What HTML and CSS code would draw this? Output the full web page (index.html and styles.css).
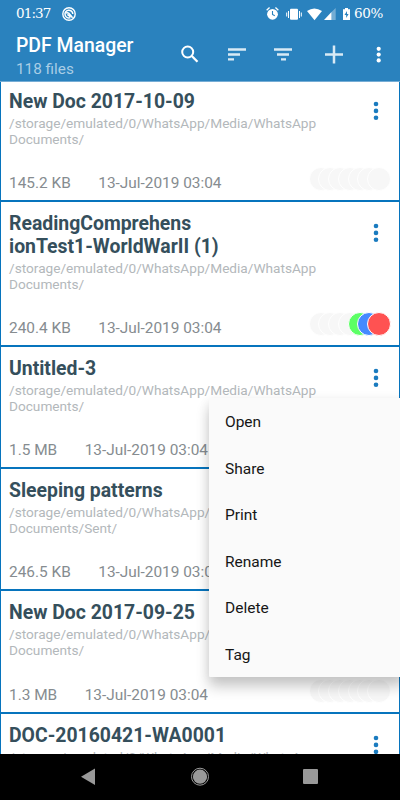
FILE: index.html
```html
<!DOCTYPE html>
<html lang="en">
<head>
<meta charset="utf-8">
<title>PDF Manager</title>
<link rel="stylesheet" href="styles.css">
</head>
<body>
<div class="screen">
  <header class="header">
    <div class="status">
      <span class="clock">01:37</span>
      <svg class="brand" width="14" height="14" viewBox="0 0 14 14"><circle cx="7" cy="7" r="6.2" fill="none" stroke="#fff" stroke-width="1.4"/><path d="M8.5 10.6A3.9 3.9 0 1 1 10.8 7M4 6.2C6.4 4.6 7.6 7 10.6 10.8M5.4 7.4L8.5 10" fill="none" stroke="#fff" stroke-width="1.5"/></svg>
      <svg class="signals" width="86" height="16" viewBox="0 0 86 16">
        <g fill="#fff"><circle cx="7.5" cy="8.3" r="5.4"/><path d="M1.2 3.7L4.1 1.1L5 2.1L2.1 4.7ZM13.8 3.7L10.9 1.1L10 2.1L12.9 4.7Z"/>
        <rect x="25" y="2.8" width="8" height="11" rx="1"/><path d="M23 5h1v7h-1zM21.2 6.5h1v4h-1zM34 5h1v7h-1zM35.8 6.5h1v4h-1z"/>
        <path d="M42 5Q49.3 0 57 5L49.5 14.2Z"/><path d="M59 14L66.5 6V14Z"/><path d="M66.5 6L70.7 2V14H66.5Z" opacity=".35"/>
        <path d="M78 3.2H80V2H83V3.2H85V14H78Z"/></g>
        <path d="M7.5 5V8.5L9.8 9.8" fill="none" stroke="#2a82be" stroke-width="1.1"/><path d="M82 5L79.5 9H81.2V12L83.6 7.9H82Z" fill="#2a82be"/>
      </svg>
      <span class="battery">60%</span>
    </div>
    <div class="toolbar">
      <div class="heading"><h1>PDF Manager</h1><p>118 files</p></div>
      <svg class="actions" width="210" height="28" viewBox="0 0 210 28">
        <g fill="none" stroke="#fff"><circle cx="7.7" cy="12" r="5.5" stroke-width="2"/><path d="M11.8 16L17.5 21.7" stroke-width="2.3"/>
        <g stroke="#d9eaf5" stroke-width="2.4"><path d="M48 9.5H66M48 14.5H60M48 19.4H54M94 9.5H112M97 14.5H109M101 19.4H106"/><path d="M145 14.5H163M154 5.5V23.5" stroke-width="2.5"/></g></g>
        <g fill="#fff"><circle cx="198.7" cy="8.8" r="2.1"/><circle cx="198.7" cy="14.6" r="2.1"/><circle cx="198.7" cy="20.4" r="2.1"/></g>
      </svg>
    </div>
  </header>
  <main class="files">
    <article class="card"><div class="top"><h2>New Doc 2017-10-09</h2><svg class="more"><use href="#dots"/></svg></div><p class="path">/storage/emulated/0/WhatsApp/Media/WhatsApp<br>Documents/</p><div class="meta"><span>145.2 KB</span><span>13-Jul-2019 03:04</span><div class="tags"><i></i><i></i><i></i><i></i><i></i><i></i><i></i></div></div></article>
    <article class="card tall"><div class="top"><h2>ReadingComprehens<br>ionTest1-WorldWarII (1)</h2><svg class="more"><use href="#dots"/></svg></div><p class="path">/storage/emulated/0/WhatsApp/Media/WhatsApp<br>Documents/</p><div class="meta"><span>240.4 KB</span><span>13-Jul-2019 03:04</span><div class="tags"><i></i><i></i><i></i><i></i><i class="green"></i><i class="blue"></i><i class="red"></i></div></div></article>
    <article class="card"><div class="top"><h2>Untitled-3</h2><svg class="more"><use href="#dots"/></svg></div><p class="path">/storage/emulated/0/WhatsApp/Media/WhatsApp<br>Documents/</p><div class="meta"><span>1.5 MB</span><span>13-Jul-2019 03:04</span></div></article>
    <article class="card"><div class="top"><h2>Sleeping patterns</h2></div><p class="path">/storage/emulated/0/WhatsApp/Media/WhatsApp<br>Documents/Sent/</p><div class="meta"><span>246.5 KB</span><span>13-Jul-2019 03:04</span></div></article>
    <article class="card"><div class="top"><h2>New Doc 2017-09-25</h2></div><p class="path">/storage/emulated/0/WhatsApp/Media/WhatsApp<br>Documents/</p><div class="meta"><span>1.3 MB</span><span>13-Jul-2019 03:04</span><div class="tags"><i></i><i></i><i></i><i></i><i></i><i></i><i></i></div></div></article>
    <article class="card"><div class="top"><h2>DOC-20160421-WA0001</h2><svg class="more"><use href="#dots"/></svg></div><p class="path">/storage/emulated/0/WhatsApp/Media/WhatsApp</p></article>
  </main>
  <nav class="navbar">
    <svg width="400" height="46" viewBox="0 0 400 46"><g fill="#999"><path d="M81 22.7L95 14.5V31Z"/><circle cx="200" cy="22.7" r="7.1"/><circle cx="200" cy="22.7" r="8.5" fill="none" stroke="#999" stroke-width="1"/><rect x="303" y="15" width="15" height="15" rx="1"/></g></svg>
  </nav>
  <div class="menu"><span>Open</span><span>Share</span><span>Print</span><span>Rename</span><span>Delete</span><span>Tag</span></div>
</div>
<svg class="defs"><symbol id="dots" viewBox="0 0 6 20"><circle cx="3" cy="3" r="2.3" fill="#1a7bbf"/><circle cx="3" cy="9.9" r="2.3" fill="#1a7bbf"/><circle cx="3" cy="16.8" r="2.3" fill="#1a7bbf"/></symbol></svg>
</body>
</html>
```
FILE: styles.css
```css
* { box-sizing: border-box; }
body, h1, h2, p { margin: 0; }
body { font-family: Roboto, sans-serif; overflow: hidden; }
.defs { display: none; }
.screen { position: relative; width: 400px; height: 800px; display: flex; flex-direction: column; overflow: hidden; background: #fff; }
.header { height: 82px; flex: none; background: #2a82be; color: #fff; border-bottom: 1px solid #76add5; }
.status { height: 28px; display: flex; align-items: center; padding: 0 15px 0 16px; font: 13.5px/26px "DejaVu Serif", serif; }
.clock { width: 36px; letter-spacing: -.9px; }
.brand { margin-left: 10px; }
.signals { margin-left: auto; margin-right: 3px; }
.battery { width: 31px; letter-spacing: -.3px; white-space: nowrap; }
.clock, .battery { height: 28px; }
.toolbar { display: flex; height: 54px; padding-left: 16px; }
.heading { width: 164px; padding-top: 6px; }
.heading h1 { font-size: 19.4px; line-height: 24px; font-weight: 500; white-space: nowrap; }
.heading p { font-size: 15.3px; line-height: 22px; color: #a9cde5; }
.actions { margin-top: 12px; }
.files { height: 672px; flex: none; overflow: hidden; border-left: 1px solid #0774bd; border-right: 1px solid #0774bd; }
.card { height: 122.2px; padding: 10px 8px 0; border-bottom: 2px solid #0774bd; background: #fff; display: flex; flex-direction: column; }
.card:first-child { height: 120px; padding-top: 8px; }
.card.tall { height: 145px; }
.top { display: flex; justify-content: space-between; align-items: flex-start; }
.top h2 { font-size: 19.4px; line-height: 23px; font-weight: 700; color: #354f5c; white-space: nowrap; }
.more { width: 6px; height: 20px; margin: 11px 12px -8px 0; flex: none; }
.path { margin-top: 2px; font-size: 13.65px; line-height: 16px; color: #b3b8bb; white-space: nowrap; }
.meta { display: flex; height: 24px; margin-top: auto; margin-bottom: 5px; align-items: center; gap: 27.5px; font-size: 15.4px; color: #868c90; white-space: nowrap; }
.tags { margin-left: auto; display: flex; margin-top: -8px; }
.tags i { width: 24px; height: 24px; margin-left: -14.3px; border-radius: 50%; background: #f7f7f7; border: 1px solid #fff; }
.tags .green { background: #5cff65; }
.tags .blue { background: #448aff; }
.tags .red { background: #ff5252; }
.navbar { height: 46px; background: #000; }
.navbar svg { display: block; }
.menu { position: absolute; left: 209px; top: 398px; width: 196px; height: 279px; background: #fafafa; border-radius: 1px; display: flex; flex-direction: column; padding: 0 16px; font-size: 15.5px; color: #161616; box-shadow: 0 10px 14px rgba(0,0,0,.2), 0 2px 12px rgba(0,0,0,.07); }
.menu span { height: 46.6px; line-height: 48px; flex: none; }
```
